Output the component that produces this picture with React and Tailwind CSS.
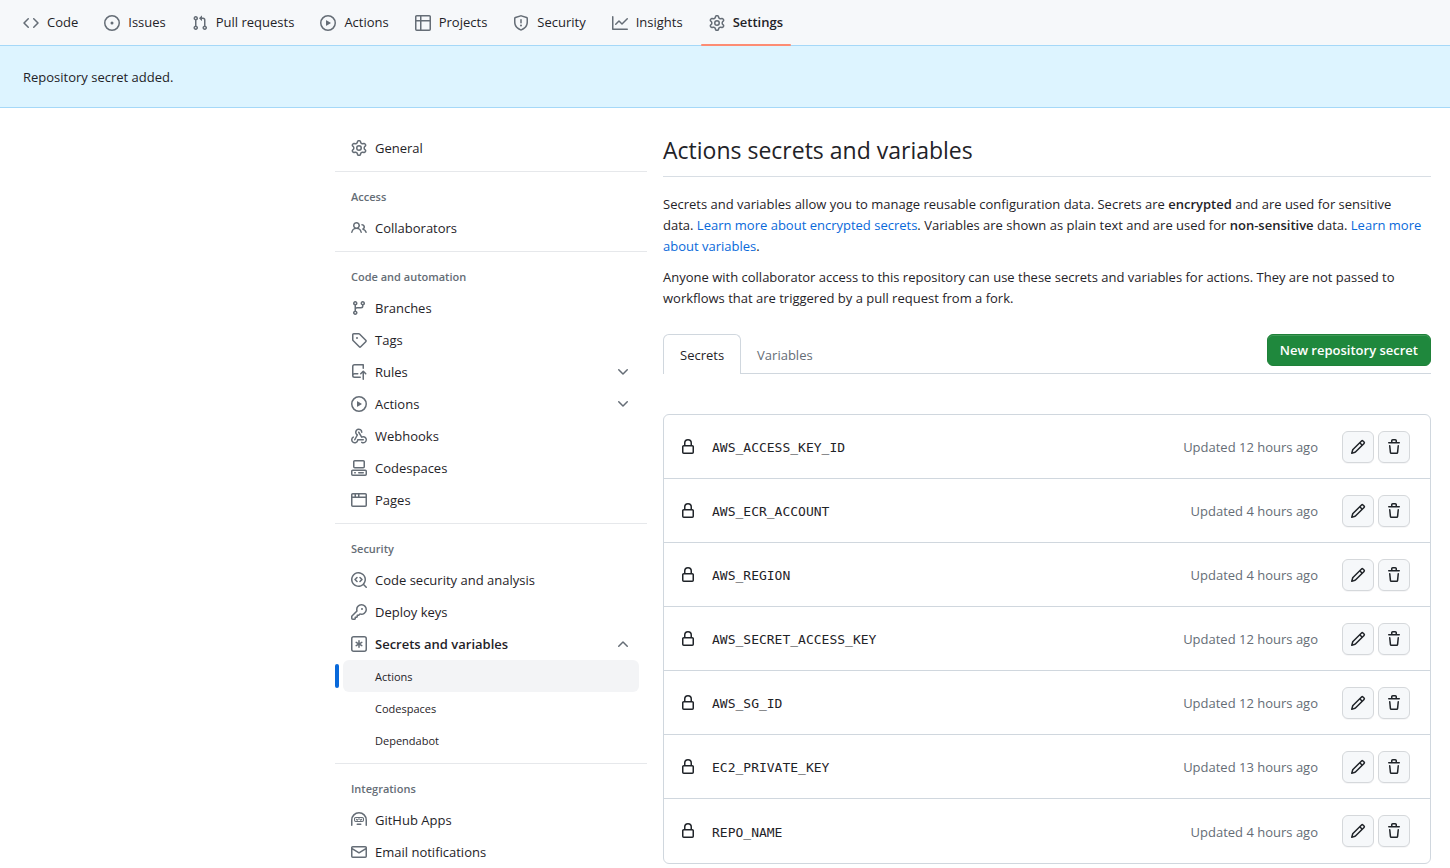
import React from 'react';

const iconPaths = {
  code: 'm11.28 3.22 4.25 4.25a.75.75 0 0 1 0 1.06l-4.25 4.25a.749.749 0 0 1-1.275-.326.749.749 0 0 1 .215-.734L13.94 8l-3.72-3.72a.749.749 0 0 1 .326-1.275.749.749 0 0 1 .734.215Zm-6.56 0a.751.751 0 0 1 1.042.018.751.751 0 0 1 .018 1.042L2.06 8l3.72 3.72a.749.749 0 0 1-.326 1.275.749.749 0 0 1-.734-.215L.47 8.53a.75.75 0 0 1 0-1.06Z',
  issue: 'M8 9.5a1.5 1.5 0 1 0 0-3 1.5 1.5 0 0 0 0 3Z M8 0a8 8 0 1 1 0 16A8 8 0 0 1 8 0ZM1.5 8a6.5 6.5 0 1 0 13 0 6.5 6.5 0 0 0-13 0Z',
  pull: 'M1.5 3.25a2.25 2.25 0 1 1 3 2.122v5.256a2.251 2.251 0 1 1-1.5 0V5.372A2.25 2.25 0 0 1 1.5 3.25Zm5.677-.177L9.573.677A.25.25 0 0 1 10 .854V2.5h1A2.5 2.5 0 0 1 13.5 5v5.628a2.251 2.251 0 1 1-1.5 0V5a1 1 0 0 0-1-1h-1v1.646a.25.25 0 0 1-.427.177L7.177 3.427a.25.25 0 0 1 0-.354ZM3.75 2.5a.75.75 0 1 0 0 1.5.75.75 0 0 0 0-1.5Zm0 9.5a.75.75 0 1 0 0 1.5.75.75 0 0 0 0-1.5Zm8.25.75a.75.75 0 1 0 1.5 0 .75.75 0 0 0-1.5 0Z',
  play: 'M8 0a8 8 0 1 1 0 16A8 8 0 0 1 8 0ZM1.5 8a6.5 6.5 0 1 0 13 0 6.5 6.5 0 0 0-13 0Zm4.879-2.773 4.264 2.559a.25.25 0 0 1 0 .428l-4.264 2.559A.25.25 0 0 1 6 10.559V5.442a.25.25 0 0 1 .379-.215Z',
  table: 'M0 1.75C0 .784.784 0 1.75 0h12.5C15.216 0 16 .784 16 1.75v12.5A1.75 1.75 0 0 1 14.25 16H1.75A1.75 1.75 0 0 1 0 14.25ZM6.5 6.5v8h7.75a.25.25 0 0 0 .25-.25V6.5Zm8-1.5V1.75a.25.25 0 0 0-.25-.25H6.5V5Zm-13 1.5v7.75c0 .138.112.25.25.25H5v-8ZM5 5V1.5H1.75a.25.25 0 0 0-.25.25V5Z',
  shield: 'M7.467.133a1.748 1.748 0 0 1 1.066 0l5.25 1.68A1.75 1.75 0 0 1 15 3.48V7c0 1.566-.32 3.182-1.303 4.682-.983 1.498-2.585 2.813-5.032 3.855a1.697 1.697 0 0 1-1.33 0c-2.447-1.042-4.049-2.357-5.032-3.855C1.32 10.182 1 8.566 1 7V3.48a1.755 1.755 0 0 1 1.217-1.667Zm.61 1.429a.25.25 0 0 0-.153 0l-5.25 1.68a.25.25 0 0 0-.174.238V7c0 1.358.275 2.666 1.057 3.86.784 1.194 2.121 2.34 4.366 3.297a.196.196 0 0 0 .154 0c2.245-.956 3.582-2.104 4.366-3.298C13.225 9.666 13.5 8.36 13.5 7V3.48a.251.251 0 0 0-.174-.237l-5.25-1.68ZM8.75 4.75v3a.75.75 0 0 1-1.5 0v-3a.75.75 0 0 1 1.5 0ZM9 10.5a1 1 0 1 1-2 0 1 1 0 0 1 2 0Z',
  graph: 'M1.5 1.75V13.5h13.75a.75.75 0 0 1 0 1.5H.75a.75.75 0 0 1-.75-.75V1.75a.75.75 0 0 1 1.5 0Zm14.28 2.53-5.25 5.25a.75.75 0 0 1-1.06 0L7 7.06 4.28 9.78a.751.751 0 0 1-1.042-.018.751.751 0 0 1-.018-1.042l3.25-3.25a.75.75 0 0 1 1.06 0L10 7.94l4.72-4.72a.751.751 0 0 1 1.042.018.751.751 0 0 1 .018 1.042Z',
  gear: 'M8 0a8.2 8.2 0 0 1 .701.031C9.444.095 9.99.645 10.16 1.29l.288 1.107c.018.066.079.158.212.224.231.114.454.243.668.386.123.082.233.09.299.071l1.103-.303c.644-.176 1.392.021 1.82.63.27.385.506.792.704 1.218.315.675.111 1.422-.364 1.891l-.814.806c-.049.048-.098.147-.088.294.016.257.016.515 0 .772-.01.147.038.246.088.294l.814.806c.475.469.679 1.216.364 1.891a7.977 7.977 0 0 1-.704 1.217c-.428.61-1.176.807-1.82.63l-1.102-.302c-.067-.019-.177-.011-.3.071a5.909 5.909 0 0 1-.668.386c-.133.066-.194.158-.211.224l-.29 1.106c-.168.646-.715 1.196-1.458 1.26a8.006 8.006 0 0 1-1.402 0c-.743-.064-1.289-.614-1.458-1.26l-.289-1.106c-.018-.066-.079-.158-.212-.224a5.738 5.738 0 0 1-.668-.386c-.123-.082-.233-.09-.299-.071l-1.103.303c-.644.176-1.392-.021-1.82-.63a8.12 8.12 0 0 1-.704-1.218c-.315-.675-.111-1.422.363-1.891l.815-.806c.05-.048.098-.147.088-.294a6.214 6.214 0 0 1 0-.772c.01-.147-.038-.246-.088-.294l-.815-.806C.635 6.045.431 5.298.746 4.623a7.92 7.92 0 0 1 .704-1.217c.428-.61 1.176-.807 1.82-.63l1.102.302c.067.019.177.011.3-.071.214-.143.437-.272.668-.386.133-.066.194-.158.211-.224l.29-1.106C6.009.645 6.556.095 7.299.03 7.53.01 7.764 0 8 0Zm-.571 1.525c-.036.003-.108.036-.137.146l-.289 1.105c-.147.561-.549.967-.998 1.189-.173.086-.34.183-.5.29-.417.278-.97.423-1.529.27l-1.103-.303c-.109-.03-.175.016-.195.045-.22.312-.412.644-.573.99-.014.031-.021.11.059.19l.815.806c.411.406.562.957.53 1.456a4.709 4.709 0 0 0 0 .582c.032.499-.119 1.05-.53 1.456l-.815.806c-.081.08-.073.159-.059.19.162.346.353.677.573.989.02.03.085.076.195.046l1.102-.303c.56-.153 1.113-.008 1.53.27.161.107.328.204.501.29.447.222.85.629.997 1.189l.289 1.105c.029.109.101.143.137.146a6.6 6.6 0 0 0 1.142 0c.036-.003.108-.036.137-.146l.289-1.105c.147-.561.549-.967.998-1.189.173-.086.34-.183.5-.29.417-.278.97-.423 1.529-.27l1.103.303c.109.029.175-.016.195-.045.22-.313.411-.644.573-.99.014-.031.021-.11-.059-.19l-.815-.806c-.411-.406-.562-.957-.53-1.456a4.709 4.709 0 0 0 0-.582c-.032-.499.119-1.05.53-1.456l.815-.806c.081-.08.073-.159.059-.19a6.464 6.464 0 0 0-.573-.989c-.02-.03-.085-.076-.195-.046l-1.102.303c-.56.153-1.113.008-1.53-.27a4.44 4.44 0 0 0-.501-.29c-.447-.222-.85-.629-.997-1.189l-.289-1.105c-.029-.11-.101-.143-.137-.146a6.6 6.6 0 0 0-1.142 0ZM11 8a3 3 0 1 1-6 0 3 3 0 0 1 6 0ZM9.5 8a1.5 1.5 0 1 0-3.001.001A1.5 1.5 0 0 0 9.5 8Z',
  people: 'M2 5.5a3.5 3.5 0 1 1 5.898 2.549 5.508 5.508 0 0 1 3.034 4.084.75.75 0 1 1-1.482.235 4 4 0 0 0-7.9 0 .75.75 0 0 1-1.482-.236A5.507 5.507 0 0 1 3.102 8.05 3.493 3.493 0 0 1 2 5.5ZM11 4a3.001 3.001 0 0 1 2.22 5.018 5.01 5.01 0 0 1 2.56 3.012.749.749 0 0 1-.885.954.752.752 0 0 1-.549-.514 3.507 3.507 0 0 0-2.522-2.372.75.75 0 0 1-.574-.73v-.352a.75.75 0 0 1 .416-.672A1.5 1.5 0 0 0 11 5.5.75.75 0 0 1 11 4Zm-5.5-.5a2 2 0 1 0-.001 3.999A2 2 0 0 0 5.5 3.5Z',
  branch: 'M9.5 3.25a2.25 2.25 0 1 1 3 2.122V6A2.5 2.5 0 0 1 10 8.5H6a1 1 0 0 0-1 1v1.128a2.251 2.251 0 1 1-1.5 0V5.372a2.25 2.25 0 1 1 1.5 0v1.836A2.493 2.493 0 0 1 6 7h4a1 1 0 0 0 1-1v-.628A2.25 2.25 0 0 1 9.5 3.25Zm-6 0a.75.75 0 1 0 1.5 0 .75.75 0 0 0-1.5 0Zm8.25-.75a.75.75 0 1 0 0 1.5.75.75 0 0 0 0-1.5ZM4.25 12a.75.75 0 1 0 0 1.5.75.75 0 0 0 0-1.5Z',
  tag: 'M1 7.775V2.75C1 1.784 1.784 1 2.75 1h5.025c.464 0 .91.184 1.238.513l6.25 6.25a1.75 1.75 0 0 1 0 2.474l-5.026 5.026a1.75 1.75 0 0 1-2.474 0l-6.25-6.25A1.752 1.752 0 0 1 1 7.775Zm1.5 0c0 .066.026.13.073.177l6.25 6.25a.25.25 0 0 0 .354 0l5.025-5.025a.25.25 0 0 0 0-.354l-6.25-6.25a.25.25 0 0 0-.177-.073H2.75a.25.25 0 0 0-.25.25ZM6 5a1 1 0 1 1 0 2 1 1 0 0 1 0-2Z',
  rules: 'M1 2.5A2.5 2.5 0 0 1 3.5 0h8.75a.75.75 0 0 1 .75.75v3.5a.75.75 0 0 1-1.5 0V1.5h-8a1 1 0 0 0-1 1v6.708A2.493 2.493 0 0 1 3.5 9h3.25a.75.75 0 0 1 0 1.5H3.5a1 1 0 0 0 0 2h5.75a.75.75 0 0 1 0 1.5H3.5A2.5 2.5 0 0 1 1 11.5Zm13.23 7.79-1.23-1.224v6.184a.75.75 0 0 1-1.5 0V9.066l-1.224 1.224a.749.749 0 0 1-1.275-.326.749.749 0 0 1 .215-.734l2.5-2.5a.75.75 0 0 1 1.06 0l2.5 2.5a.751.751 0 0 1-.018 1.042.751.751 0 0 1-1.042.018Z',
  webhook: 'M5.5 4.25a2.25 2.25 0 0 1 4.5 0 .75.75 0 0 0 1.5 0 3.75 3.75 0 1 0-6.14 2.889l-2.272 4.258a.75.75 0 0 0 1.324.706L7 7.25a.75.75 0 0 0-.309-1.015A2.25 2.25 0 0 1 5.5 4.25Z M7.364 3.607a.75.75 0 0 1 1.03.257l2.608 4.349a3.75 3.75 0 1 1-.628 6.785.75.75 0 0 1 .752-1.299 2.25 2.25 0 1 0-.033-3.88.75.75 0 0 1-1.03-.256L7.107 4.636a.75.75 0 0 1 .257-1.03Z M2.9 8.776A.75.75 0 0 1 2.625 9.8 2.25 2.25 0 1 0 6 11.75a.75.75 0 0 1 .75-.751h5.5a.75.75 0 0 1 0 1.5H7.425a3.751 3.751 0 1 1-5.55-3.998.75.75 0 0 1 1.024.274Z',
  codespaces: 'M0 11.25c0-.966.784-1.75 1.75-1.75h12.5c.966 0 1.75.784 1.75 1.75v3A1.75 1.75 0 0 1 14.25 16H1.75A1.75 1.75 0 0 1 0 14.25Zm2-9.5C2 .784 2.784 0 3.75 0h8.5C13.216 0 14 .784 14 1.75v5a1.75 1.75 0 0 1-1.75 1.75h-8.5A1.75 1.75 0 0 1 2 6.75Zm1.75-.25a.25.25 0 0 0-.25.25v5c0 .138.112.25.25.25h8.5a.25.25 0 0 0 .25-.25v-5a.25.25 0 0 0-.25-.25Zm-2 9.5a.25.25 0 0 0-.25.25v3c0 .138.112.25.25.25h12.5a.25.25 0 0 0 .25-.25v-3a.25.25 0 0 0-.25-.25Z M7 12.75a.75.75 0 0 1 .75-.75h4.5a.75.75 0 0 1 0 1.5h-4.5a.75.75 0 0 1-.75-.75Zm-4 0a.75.75 0 0 1 .75-.75h.5a.75.75 0 0 1 0 1.5h-.5a.75.75 0 0 1-.75-.75Z',
  browser: 'M0 2.75C0 1.784.784 1 1.75 1h12.5c.966 0 1.75.784 1.75 1.75v10.5A1.75 1.75 0 0 1 14.25 15H1.75A1.75 1.75 0 0 1 0 13.25ZM14.5 6h-13v7.25c0 .138.112.25.25.25h12.5a.25.25 0 0 0 .25-.25Zm-6-3.5v2h6V2.75a.25.25 0 0 0-.25-.25ZM5 2.5v2h2v-2Zm-3.25 0a.25.25 0 0 0-.25.25V4.5h2v-2Z',
  codescan: 'M8.47 4.97a.75.75 0 0 0 0 1.06L9.94 7.5 8.47 8.97a.75.75 0 1 0 1.06 1.06l2-2a.75.75 0 0 0 0-1.06l-2-2a.75.75 0 0 0-1.06 0ZM6.53 6.03a.75.75 0 0 0-1.06-1.06l-2 2a.75.75 0 0 0 0 1.06l2 2a.75.75 0 1 0 1.06-1.06L5.06 7.5l1.47-1.47Z M12.246 13.307a7.501 7.501 0 1 1 1.06-1.06l2.474 2.473a.749.749 0 0 1-.326 1.275.749.749 0 0 1-.734-.215ZM1.5 7.5a6.002 6.002 0 0 0 3.608 5.504 6.002 6.002 0 0 0 6.486-1.117.748.748 0 0 1 .292-.293A6 6 0 1 0 1.5 7.5Z',
  key: 'M10.5 0a5.499 5.499 0 1 1-1.288 10.848l-.932.932a.749.749 0 0 1-.53.22H7v.75a.749.749 0 0 1-.22.53l-.5.5a.749.749 0 0 1-.53.22H5v.75a.749.749 0 0 1-.22.53l-.5.5a.749.749 0 0 1-.53.22h-2A1.75 1.75 0 0 1 0 14.25v-2c0-.199.079-.389.22-.53l4.932-4.932A5.5 5.5 0 0 1 10.5 0Zm-4 5.5c-.001.431.069.86.205 1.269a.75.75 0 0 1-.181.768L1.5 12.56v1.69c0 .138.112.25.25.25h1.69l.06-.06v-1.19a.75.75 0 0 1 .75-.75h1.19l.06-.06v-1.19a.75.75 0 0 1 .75-.75h1.19l1.023-1.025a.75.75 0 0 1 .768-.18A4 4 0 1 0 6.5 5.5ZM11 6a1 1 0 1 1 0-2 1 1 0 0 1 0 2Z',
  asterisk: 'M0 2.75A2.75 2.75 0 0 1 2.75 0h10.5A2.75 2.75 0 0 1 16 2.75v10.5A2.75 2.75 0 0 1 13.25 16H2.75A2.75 2.75 0 0 1 0 13.25ZM2.75 1.5c-.69 0-1.25.56-1.25 1.25v10.5c0 .69.56 1.25 1.25 1.25h10.5c.69 0 1.25-.56 1.25-1.25V2.75c0-.69-.56-1.25-1.25-1.25Z M8 4a.75.75 0 0 1 .75.75V6.7l1.69-.975a.75.75 0 0 1 .75 1.3L9.5 8l1.69.976a.75.75 0 0 1-.75 1.298L8.75 9.3v1.951a.75.75 0 0 1-1.5 0V9.299l-1.69.976a.75.75 0 0 1-.75-1.3L6.5 8l-1.69-.975a.75.75 0 0 1 .75-1.3l1.69.976V4.75A.75.75 0 0 1 8 4Z',
  hubot: 'M0 8a8 8 0 1 1 16 0v5.25a.75.75 0 0 1-1.5 0V8a6.5 6.5 0 1 0-13 0v5.25a.75.75 0 0 1-1.5 0Zm5.5 4.25a.75.75 0 0 1 .75-.75h3.5a.75.75 0 0 1 0 1.5h-3.5a.75.75 0 0 1-.75-.75ZM3 6.75C3 5.784 3.784 5 4.75 5h6.5c.966 0 1.75.784 1.75 1.75v1.5A1.75 1.75 0 0 1 11.25 10h-6.5A1.75 1.75 0 0 1 3 8.25ZM4.75 6.1a.65.65 0 0 0-.65.65v1.5c0 .36.29.65.65.65h6.5a.65.65 0 0 0 .65-.65v-1.5a.65.65 0 0 0-.65-.65ZM5 6.4 6.2 7.6 7.4 6.4h1.2L9.8 7.6 11 6.4v1.3L9.8 8.9 8 7.1 6.2 8.9 5 7.7Z',
  mail: 'M1.75 2h12.5c.966 0 1.75.784 1.75 1.75v8.5A1.75 1.75 0 0 1 14.25 14H1.75A1.75 1.75 0 0 1 0 12.25v-8.5C0 2.784.784 2 1.75 2ZM1.5 12.251c0 .138.112.25.25.25h12.5a.25.25 0 0 0 .25-.25V5.809L8.38 9.397a.75.75 0 0 1-.76 0L1.5 5.809v6.442Zm13-8.181v-.32a.25.25 0 0 0-.25-.25H1.75a.25.25 0 0 0-.25.25v.32L8 7.88Z',
  lock: 'M4 4a4 4 0 0 1 8 0v2h.25c.966 0 1.75.784 1.75 1.75v5.5A1.75 1.75 0 0 1 12.25 15h-8.5A1.75 1.75 0 0 1 2 13.25v-5.5C2 6.784 2.784 6 3.75 6H4Zm8.25 3.5h-8.5a.25.25 0 0 0-.25.25v5.5c0 .138.112.25.25.25h8.5a.25.25 0 0 0 .25-.25v-5.5a.25.25 0 0 0-.25-.25ZM10.5 6V4a2.5 2.5 0 1 0-5 0v2Z',
  pencil: 'M11.013 1.427a1.75 1.75 0 0 1 2.474 0l1.086 1.086a1.75 1.75 0 0 1 0 2.474l-8.61 8.61c-.21.21-.47.364-.756.445l-3.251.93a.75.75 0 0 1-.927-.928l.929-3.25c.081-.286.235-.547.445-.758l8.61-8.61Zm.176 4.823L9.75 4.81l-6.286 6.287a.253.253 0 0 0-.064.108l-.558 1.953 1.953-.558a.253.253 0 0 0 .108-.064Zm1.238-3.763a.25.25 0 0 0-.354 0L10.811 3.75l1.439 1.44 1.263-1.263a.25.25 0 0 0 0-.354Z',
  trash: 'M11 1.75V3h2.25a.75.75 0 0 1 0 1.5H2.75a.75.75 0 0 1 0-1.5H5V1.75C5 .784 5.784 0 6.75 0h2.5C10.216 0 11 .784 11 1.75ZM4.496 6.675l.66 6.6a.25.25 0 0 0 .249.225h5.19a.25.25 0 0 0 .249-.225l.66-6.6a.75.75 0 0 1 1.492.149l-.66 6.6A1.748 1.748 0 0 1 10.595 15h-5.19a1.75 1.75 0 0 1-1.741-1.575l-.66-6.6a.75.75 0 1 1 1.492-.15ZM6.5 1.75V3h3V1.75a.25.25 0 0 0-.25-.25h-2.5a.25.25 0 0 0-.25.25Z',
  chevron: 'M12.78 5.22a.749.749 0 0 1 0 1.06l-4.25 4.25a.749.749 0 0 1-1.06 0L3.22 6.28a.749.749 0 1 1 1.06-1.06L8 8.939l3.72-3.719a.749.749 0 0 1 1.06 0Z',
};

function Icon({ name, className = 'text-[#656d76]' }) {
  return (
    <svg viewBox="0 0 16 16" fill="currentColor" aria-hidden="true" className={`size-4 shrink-0 ${className}`}>
      <path d={iconPaths[name]} />
    </svg>
  );
}

const repoTabs = [
  { label: 'Code', icon: 'code' },
  { label: 'Issues', icon: 'issue' },
  { label: 'Pull requests', icon: 'pull' },
  { label: 'Actions', icon: 'play' },
  { label: 'Projects', icon: 'table' },
  { label: 'Security', icon: 'shield' },
  { label: 'Insights', icon: 'graph' },
  { label: 'Settings', icon: 'gear', active: true },
];

const menuGroups = [
  { items: [{ label: 'General', icon: 'gear' }] },
  { title: 'Access', items: [{ label: 'Collaborators', icon: 'people' }] },
  {
    title: 'Code and automation',
    items: [
      { label: 'Branches', icon: 'branch' },
      { label: 'Tags', icon: 'tag' },
      { label: 'Rules', icon: 'rules', expandable: true },
      { label: 'Actions', icon: 'play', expandable: true },
      { label: 'Webhooks', icon: 'webhook' },
      { label: 'Codespaces', icon: 'codespaces' },
      { label: 'Pages', icon: 'browser' },
    ],
  },
  {
    title: 'Security',
    items: [
      { label: 'Code security and analysis', icon: 'codescan' },
      { label: 'Deploy keys', icon: 'key' },
      {
        label: 'Secrets and variables',
        icon: 'asterisk',
        expandable: true,
        children: ['Actions', 'Codespaces', 'Dependabot'],
      },
    ],
  },
  {
    title: 'Integrations',
    items: [
      { label: 'GitHub Apps', icon: 'hubot' },
      { label: 'Email notifications', icon: 'mail' },
    ],
  },
];

const secrets = [
  { name: 'AWS_ACCESS_KEY_ID', updated: 'Updated 12 hours ago' },
  { name: 'AWS_ECR_ACCOUNT', updated: 'Updated 4 hours ago' },
  { name: 'AWS_REGION', updated: 'Updated 4 hours ago' },
  { name: 'AWS_SECRET_ACCESS_KEY', updated: 'Updated 12 hours ago' },
  { name: 'AWS_SG_ID', updated: 'Updated 12 hours ago' },
  { name: 'EC2_PRIVATE_KEY', updated: 'Updated 13 hours ago' },
  { name: 'REPO_NAME', updated: 'Updated 4 hours ago' },
];

function RepoNav() {
  return (
    <nav className="flex h-[45px] gap-[10px] bg-[#f6f8fa] px-[15px]">
      {repoTabs.map((tab) => (
        <a
          key={tab.label}
          href="#"
          className={`relative flex items-center gap-2 px-2 whitespace-nowrap ${tab.active ? 'font-semibold' : ''}`}
        >
          <Icon name={tab.icon} />
          {tab.label}
          {tab.active && <span className="absolute inset-x-0 -bottom-px h-0.5 rounded-full bg-[#fd8c73]" />}
        </a>
      ))}
    </nav>
  );
}

function MenuItem({ item }) {
  const rowClass = 'flex h-8 w-full items-center gap-2 px-2 text-left';

  return (
    <li>
      {item.expandable ? (
        <button type="button" aria-expanded={!!item.children} className={`${rowClass} ${item.children ? 'font-semibold' : ''}`}>
          <Icon name={item.icon} />
          <span className="flex-1">{item.label}</span>
          <Icon name="chevron" className={item.children ? 'rotate-180 text-[#656d76]' : 'text-[#656d76]'} />
        </button>
      ) : (
        <a href="#" className={rowClass}>
          <Icon name={item.icon} />
          {item.label}
        </a>
      )}
      {item.children && (
        <ul>
          {item.children.map((child, index) => (
            <li key={child} className="relative">
              {index === 0 && <span className="absolute top-1 -left-2 h-6 w-1 rounded-md bg-[#0969da]" />}
              <a
                href="#"
                className={`flex h-8 items-center rounded-md pl-8 text-[11px] ${index === 0 ? 'bg-[#f3f4f6]' : ''}`}
              >
                {child}
              </a>
            </li>
          ))}
        </ul>
      )}
    </li>
  );
}

function Sidebar() {
  return (
    <nav aria-label="Repository settings" className="w-[312px] shrink-0">
      {menuGroups.map((group, index) => (
        <section key={group.title || 'general'} className={index > 0 ? 'mt-[7px] border-t border-[#e6e8eb] pt-2' : ''}>
          {group.title && (
            <h2 className="flex h-8 items-center px-4 text-[11px] font-semibold text-[#656d76]">{group.title}</h2>
          )}
          <ul className="px-2">
            {group.items.map((item) => (
              <MenuItem key={item.label} item={item} />
            ))}
          </ul>
        </section>
      ))}
    </nav>
  );
}

function IconButton({ icon, label }) {
  return (
    <button
      type="button"
      aria-label={label}
      className="flex size-8 items-center justify-center rounded-md border border-[#d5d8db] bg-[#f6f8fa] shadow-[0_1px_0_rgba(31,35,40,0.04)]"
    >
      <Icon name={icon} className="text-[#1f2328]" />
    </button>
  );
}

function SecretsTable() {
  return (
    <div className="mt-10 rounded-md border border-[#d0d7de]">
      <table className="w-full border-separate border-spacing-0">
        <tbody>
          {secrets.map((secret, index) => {
            const line = index < secrets.length - 1 ? 'border-b border-[#d0d7de]' : '';
            return (
              <tr key={secret.name} className="h-16">
                <td className={`pl-4 ${line}`}>
                  <div className="flex items-center gap-4">
                    <Icon name="lock" className="text-[#1f2328]" />
                    <code className="pt-0.5 font-['DejaVu_Sans_Mono',monospace] text-[13px]">{secret.name}</code>
                  </div>
                </td>
                <td className={`pt-0.5 pr-6 text-right text-[#656d76] ${line}`}>{secret.updated}</td>
                <td className={`w-[88px] pr-5 ${line}`}>
                  <div className="flex gap-1">
                    <IconButton icon="pencil" label={`Edit ${secret.name}`} />
                    <IconButton icon="trash" label={`Delete ${secret.name}`} />
                  </div>
                </td>
              </tr>
            );
          })}
        </tbody>
      </table>
    </div>
  );
}

export default function App() {
  return (
    <div className="min-h-screen bg-white font-['Open_Sans',sans-serif] text-[13px] leading-[21px] text-[#1f2328]">
      <RepoNav />
      <div role="status" className="border-y border-[#a5d8f8] bg-[#ddf4ff] px-[23px] pt-[21px] pb-[19px]">
        Repository secret added.
      </div>

      <div className="ml-auto flex w-full max-w-[1115px] gap-4 pt-6 pr-[19px]">
        <Sidebar />
        <main className="min-w-0 flex-1">
          <h1 className="border-b border-[#d8dee4] pb-2 text-[23px] leading-9">Actions secrets and variables</h1>
          <div className="mt-[17px] space-y-[10px] pr-2">
            <p>
              Secrets and variables allow you to manage reusable configuration data. Secrets are{' '}
              <strong className="font-semibold">encrypted</strong> and are used for sensitive data.{' '}
              <a href="#" className="text-[#0969da]">Learn more about encrypted secrets</a>. Variables are shown as
              plain text and are used for <strong className="font-semibold">non-sensitive</strong> data.{' '}
              <a href="#" className="text-[#0969da]">Learn more about variables</a>.
            </p>
            <p>
              Anyone with collaborator access to this repository can use these secrets and variables for actions. They
              are not passed to workflows that are triggered by a pull request from a fork.
            </p>
          </div>

          <div className="mt-[25px] flex h-10 items-start border-b border-[#d0d7de]">
            <div role="tablist" className="flex">
              <button
                type="button"
                role="tab"
                aria-selected="true"
                className="h-10 rounded-t-md border border-b-0 border-[#d0d7de] bg-white px-4 pt-0.5"
              >
                Secrets
              </button>
              <button type="button" role="tab" aria-selected="false" className="h-10 px-4 pt-0.5 text-[#656d76]">
                Variables
              </button>
            </div>
            <button
              type="button"
              className="ml-auto h-8 rounded-md border border-[#1f8139] bg-[#1f883d] px-3 font-semibold text-white shadow-[inset_0_1px_0_rgba(255,255,255,0.15)]"
            >
              New repository secret
            </button>
          </div>

          <SecretsTable />
        </main>
      </div>
    </div>
  );
}
